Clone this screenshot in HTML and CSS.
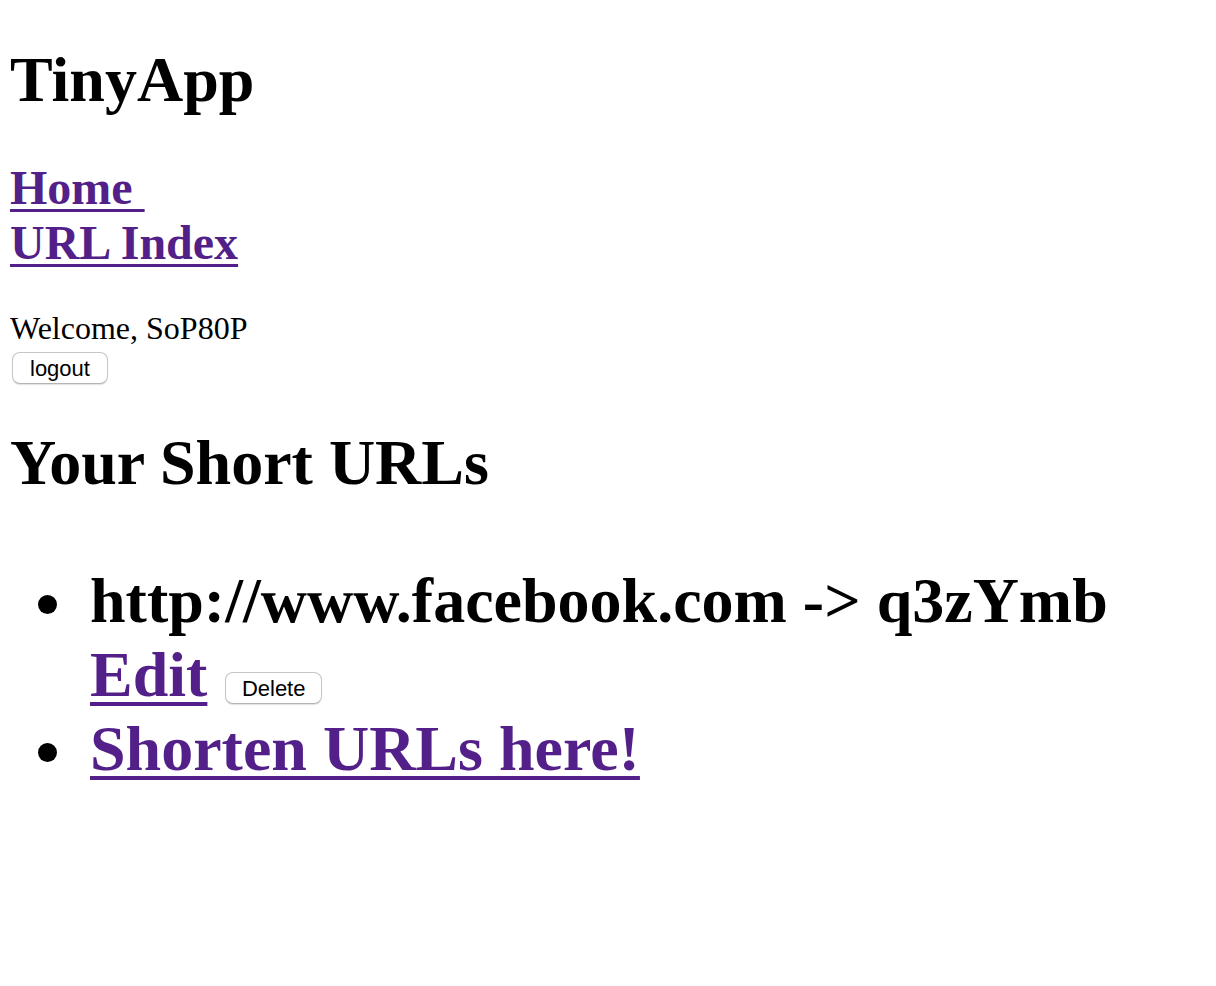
FILE: index.html
```html
<!DOCTYPE html>
<html>
<head>
<meta charset="utf-8">
<title>TinyApp</title>
<link rel="stylesheet" href="styles.css">
</head>
<body>
<h1 class="title">TinyApp</h1>
<h2 class="nav"><a href="#" class="link">Home&nbsp;</a><br><a href="#" class="link">URL Index</a></h2>
<div class="user">
  Welcome, SoP80P
  <form class="logout-form"><button class="btn btn-block" type="button">logout</button></form>
</div>
<h1 class="section-title">Your Short URLs</h1>
<ul class="url-list">
  <li class="url-item">http://www.facebook.com -&gt; q3zYmb<br><a href="#" class="link">Edit</a> <form class="inline-form"><button class="btn btn-inline" type="button">Delete</button></form></li>
  <li class="url-item"><a href="#" class="link">Shorten URLs here!</a></li>
</ul>
</body>
</html>
```
FILE: styles.css
```css
html {
  background: #fff;
}
body {
  margin: 0 10px;
  font-family: "Liberation Serif", "Times New Roman", serif;
  font-size: 32px;
  color: #000;
}
.title,
.section-title {
  font-size: 64px;
  font-weight: bold;
  margin: 0.67em 0;
  line-height: normal;
}
.nav {
  font-size: 48px;
  font-weight: bold;
  margin: 0.83em 0;
  line-height: normal;
}
.link {
  color: #531f88;
  text-decoration: underline;
  text-decoration-thickness: 0.07em;
  text-underline-offset: 0.1em;
}
.user {
  line-height: normal;
}
.logout-form {
  margin: 5px 0 2px;
}
.inline-form {
  display: inline;
  margin: 0;
}
.btn {
  font-family: "Liberation Sans", Arial, sans-serif;
  font-size: 22px;
  font-weight: normal;
  line-height: 24px;
  padding: 4px 16px 2px;
  border: 1px solid #c6c6c6;
  border-bottom-color: #b4b4b4;
  border-radius: 8px;
  background: #fff;
  color: #000;
  box-shadow: 0 1px 1px rgba(0, 0, 0, 0.12);
}
.btn-block {
  display: block;
  margin: 0 0 0 1.5px;
  padding-left: 17.5px;
  padding-right: 17.5px;
}
.btn-inline {
  display: inline-block;
  margin: 0 0 0 2px;
  padding-left: 15.5px;
  padding-right: 15.5px;
  vertical-align: baseline;
}
.url-list {
  font-size: 64px;
  font-weight: bold;
  margin: 1em 0;
  padding-left: 80px;
  line-height: normal;
  list-style: none;
}
.url-item {
  position: relative;
}
.url-item::before {
  content: "";
  position: absolute;
  left: -52px;
  top: 31px;
  width: 19px;
  height: 19px;
  border-radius: 50%;
  background: #000;
}
```
